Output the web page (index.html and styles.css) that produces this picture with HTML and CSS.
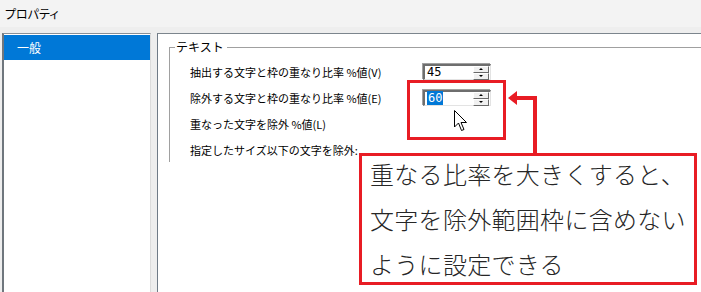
FILE: index.html
```html
<!DOCTYPE html>
<html lang="ja">
<head>
<meta charset="utf-8">
<link rel="stylesheet" href="styles.css">
</head>
<body>
<div class="titlebar">プロパティ</div>
<div class="main">
  <div class="list">
    <div class="list-item selected">一般</div>
  </div>
  <div class="panel">
    <div class="group">
      <div class="group-head"><span class="group-title">テキスト</span></div>
      <div class="group-body">
        <div class="row">
          <span class="label">抽出する文字と枠の重なり比率 %値(V)</span>
          <div class="spin"><span class="spin-value">45</span><div class="spin-btns"><span class="btn up"></span><span class="btn down"></span></div></div>
        </div>
        <div class="row">
          <span class="label">除外する文字と枠の重なり比率 %値(E)</span>
          <div class="spin"><span class="spin-value"><span class="sel">60</span></span><div class="spin-btns"><span class="btn up"></span><span class="btn down"></span></div></div>
        </div>
        <div class="row">
          <span class="label">重なった文字を除外 %値(L)</span>
        </div>
        <div class="row">
          <span class="label">指定したサイズ以下の文字を除外:</span>
        </div>
      </div>
    </div>
  </div>
</div>

<div class="mark-box"></div>
<svg class="arrow" width="36" height="68" viewBox="0 0 36 68">
  <polygon points="3,10 12,3 12,17" fill="#e81c24"/>
  <path d="M11 10 H30 V68" fill="none" stroke="#e81c24" stroke-width="4"/>
</svg>
<svg class="cursor" width="14" height="22" viewBox="0 0 14 22">
  <path d="M0.5 0.5 V17 L4.5 13 L7.5 20.5 L10 19.5 L7 12.5 H12.5 Z" fill="#fff" stroke="#000" stroke-width="1" stroke-linejoin="miter"/>
</svg>
<div class="note">
  <p>重なる比率を大きくすると、<br>文字を除外範囲枠に含めない<br>ように設定できる</p>
</div>
</body>
</html>
```

FILE: styles.css
```css
html, body {
  margin: 0;
  padding: 0;
}
body {
  width: 701px;
  height: 292px;
  overflow: hidden;
  position: relative;
  background: #f0f0f0;
  font-family: "Noto Sans CJK JP", "Noto Sans", sans-serif;
  color: #000;
}
.titlebar {
  height: 27px;
  line-height: 27px;
  padding-left: 5px;
  font-size: 12px;
  background: #f3f3f3;
  font-feature-settings: "palt";
}
.main {
  display: flex;
  height: 265px;
  padding: 6px 0 0 2px;
  box-sizing: border-box;
  background: #eeeeee;
}
.list {
  width: 149px;
  box-sizing: border-box;
  background: #fff;
  border-top: 1px solid #8a9097;
  border-left: 2px solid #6f767d;
  border-right: 1px solid #dcdcdc;
  padding-top: 1px;
}
.list-item {
  height: 25px;
  line-height: 25px;
  padding-left: 13px;
  font-size: 12px;
}
.list-item.selected {
  background: #0078d7;
  color: #fff;
}
.panel {
  flex: 1;
  margin-left: 6px;
  background: #fff;
  border-top: 1px solid #7c858d;
  border-left: 1px solid #6f7b87;
}
.group {
  margin: 6px 0 0 11px;
}
.group-head {
  display: flex;
  align-items: center;
  height: 14px;
  font-size: 12px;
}
.group-head::before {
  content: "";
  width: 6px;
  border-top: 1px solid #a0a0a0;
}
.group-head::after {
  content: "";
  flex: 1;
  border-top: 1px solid #a0a0a0;
}
.group-title {
  padding: 0 3px 0 1px;
  line-height: 14px;
}
.group-body {
  margin-top: -7px;
  height: 115px;
  border-left: 1px solid #a0a0a0;
  padding: 12px 0 0 20px;
  box-sizing: border-box;
}
.row {
  display: flex;
  align-items: center;
  height: 26px;
}
.label {
  width: 233px;
  font-size: 11px;
  white-space: nowrap;
}
.spin {
  width: 68px;
  height: 16px;
  box-sizing: border-box;
  display: flex;
  align-items: center;
  background: #fff;
  border-top: 2px solid #6e6e6e;
  border-left: 2px solid #6e6e6e;
  border-bottom: 1px solid #e3e3e3;
  border-right: 1px solid #e3e3e3;
  box-shadow: -1px -1px 0 #a0a0a0;
}
.spin-value {
  flex: 1;
  font-family: "DejaVu Sans Mono", monospace;
  font-size: 12px;
  line-height: 13px;
  padding-left: 2px;
}
.sel {
  background: #0078d7;
  color: #fff;
  padding: 0 1px;
}
.spin-btns {
  width: 16px;
  height: 14px;
  display: flex;
  flex-direction: column;
  margin-right: 1px;
}
.btn {
  flex: 1;
  position: relative;
  background: #f0f0f0;
  border-top: 1px solid #fff;
  border-left: 1px solid #fff;
  border-right: 1px solid #696969;
  border-bottom: 1px solid #696969;
}
.btn::after {
  content: "";
  position: absolute;
  left: 5px;
  top: 1px;
  border-left: 2px solid transparent;
  border-right: 2px solid transparent;
}
.btn.up::after {
  border-bottom: 2px solid #000;
}
.btn.down::after {
  border-top: 2px solid #000;
}
.mark-box {
  position: absolute;
  left: 407px;
  top: 80px;
  width: 99px;
  height: 60px;
  box-sizing: border-box;
  border: 3px solid #e81c24;
}
.arrow {
  position: absolute;
  left: 505px;
  top: 88px;
}
.cursor {
  position: absolute;
  left: 454px;
  top: 110px;
}
.note {
  position: absolute;
  left: 359px;
  top: 153px;
  width: 338px;
  height: 132px;
  box-sizing: border-box;
  border: 3px solid #e81c24;
  background: #fff;
  padding-left: 8px;
}
.note p {
  margin: -5px 0 0 0;
  font-size: 24px;
  font-weight: 300;
  line-height: 45px;
  color: #262626;
  letter-spacing: 0.3px;
  white-space: nowrap;
}
```
